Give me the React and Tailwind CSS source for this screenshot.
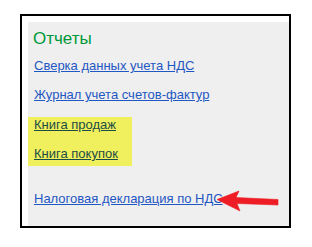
import React from 'react'

const links = [
  { text: 'Сверка данных учета НДС' },
  { text: 'Журнал учета счетов-фактур' },
]

function Arrow() {
  return (
    <svg className="absolute left-[210px] top-[185px]" width="75" height="30" viewBox="0 0 75 30">
      <polygon points="7,14.5 29,6 26,12.5 68,14.5 68,20 27,18.5 30,26" fill="#ee1c25" stroke="#ee1c25" strokeWidth="0.6" strokeLinejoin="round" />
    </svg>
  )
}

export default function App() {
  return (
    <div className="w-[312px] h-[247px] bg-white relative whitespace-nowrap" style={{ fontFamily: '"Liberation Sans", Arial, sans-serif' }}>
      <div className="absolute left-[20px] top-[14px] w-[271px] h-[214px] border-2 border-black pl-[6px] pt-[6px] bg-white">
        <div className="h-full bg-[#efefef] pt-[5px]">
          <div className="pl-[5px] text-[17px] leading-[24px] text-[#00993a]">Отчеты</div>
          <div className="flex flex-col mt-[7px] text-[13px] leading-[16px]">
            {links.map(l => (
              <div key={l.text} className="pl-[6px] h-[29px]">
                <a href="#" className="text-[#1f57c3] underline underline-offset-[1px]">{l.text}</a>
              </div>
            ))}
            <div className="bg-[#f0ef5e] w-[104px] mt-[1px] pb-[4px]">
              <div className="pl-[6px] h-[29px]">
                <a href="#" className="text-[#1c4d44] underline underline-offset-[1px]">Книга продаж</a>
              </div>
              <div className="pl-[6px] h-[16px]">
                <a href="#" className="text-[#1c4d44] underline underline-offset-[1px]">Книга покупок</a>
              </div>
            </div>
            <div className="pl-[6px] mt-[25px]">
              <a href="#" className="text-[#1f57c3] underline underline-offset-[1px]">Налоговая декларация по НДС</a>
            </div>
          </div>
        </div>
      </div>
      <Arrow />
    </div>
  )
}
